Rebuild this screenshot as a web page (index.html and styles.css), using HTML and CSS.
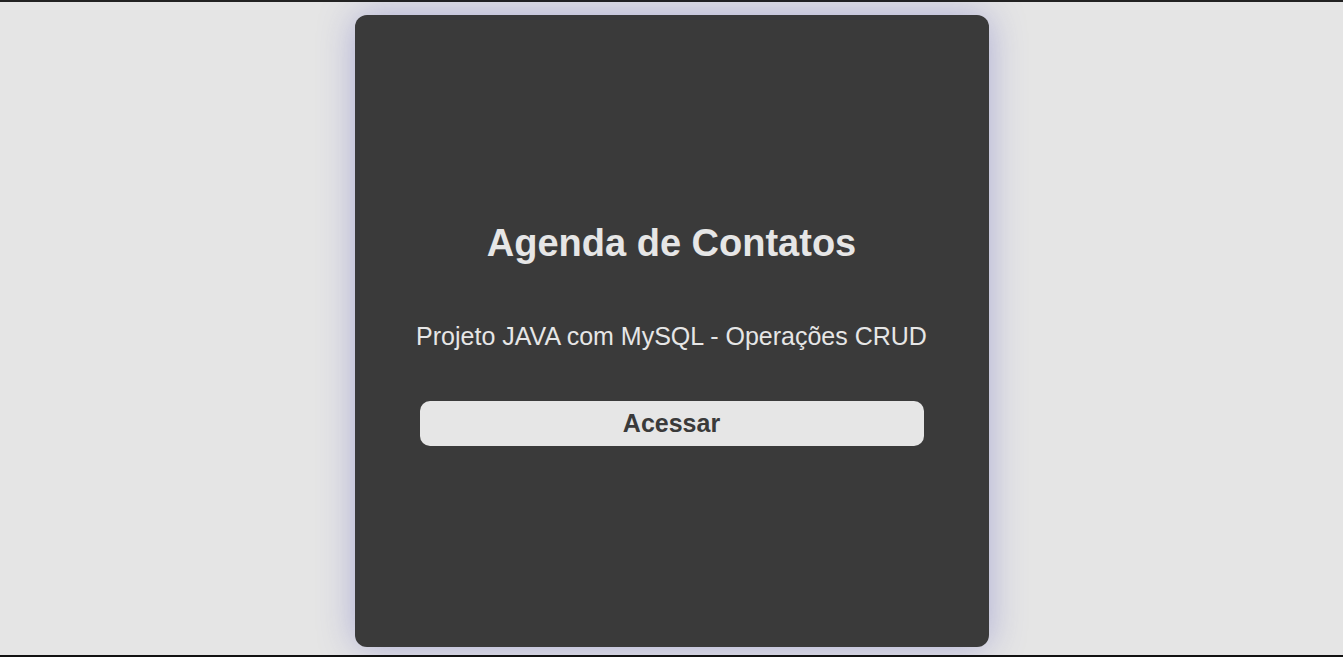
FILE: index.html
```html
<!DOCTYPE html>
<html lang="pt">
<head>
<meta charset="utf-8">
<title>Agenda de Contatos</title>
<link rel="stylesheet" href="styles.css">
</head>
<body>
<div class="page">
  <main class="card">
    <h1 class="title">Agenda de Contatos</h1>
    <p class="subtitle">Projeto JAVA com MySQL - Operações CRUD</p>
    <button class="btn" type="button">Acessar</button>
  </main>
</div>
</body>
</html>
```
FILE: styles.css
```css
html, body {
  margin: 0;
  padding: 0;
  height: 100%;
}
body {
  background: #e5e5e5;
  font-family: "Liberation Sans", Arial, sans-serif;
  box-sizing: border-box;
  border-top: 2px solid #222;
  border-bottom: 2px solid #111;
  overflow: hidden;
}
.page {
  display: flex;
  justify-content: center;
  padding-top: 13px;
}
.card {
  width: 634px;
  height: 632px;
  box-sizing: border-box;
  background: #3a3a3a;
  border-radius: 12px;
  box-shadow: 0 0 36px rgba(90, 90, 190, 0.4);
  display: flex;
  flex-direction: column;
  align-items: center;
  text-align: center;
  padding: 206px 30px 0;
  color: #e6e6e6;
}
.title {
  margin: 0;
  font-size: 38px;
  font-weight: bold;
  line-height: 44px;
}
.subtitle {
  margin: 56px 0 0;
  font-size: 25px;
  line-height: 30px;
  white-space: nowrap;
}
.btn {
  margin-top: 50px;
  width: 504px;
  height: 45px;
  border: none;
  border-radius: 10px;
  background: #e6e6e6;
  color: #3a3a3a;
  font-family: "Liberation Sans", Arial, sans-serif;
  font-size: 25px;
  font-weight: bold;
  padding: 0;
  cursor: pointer;
}
```
